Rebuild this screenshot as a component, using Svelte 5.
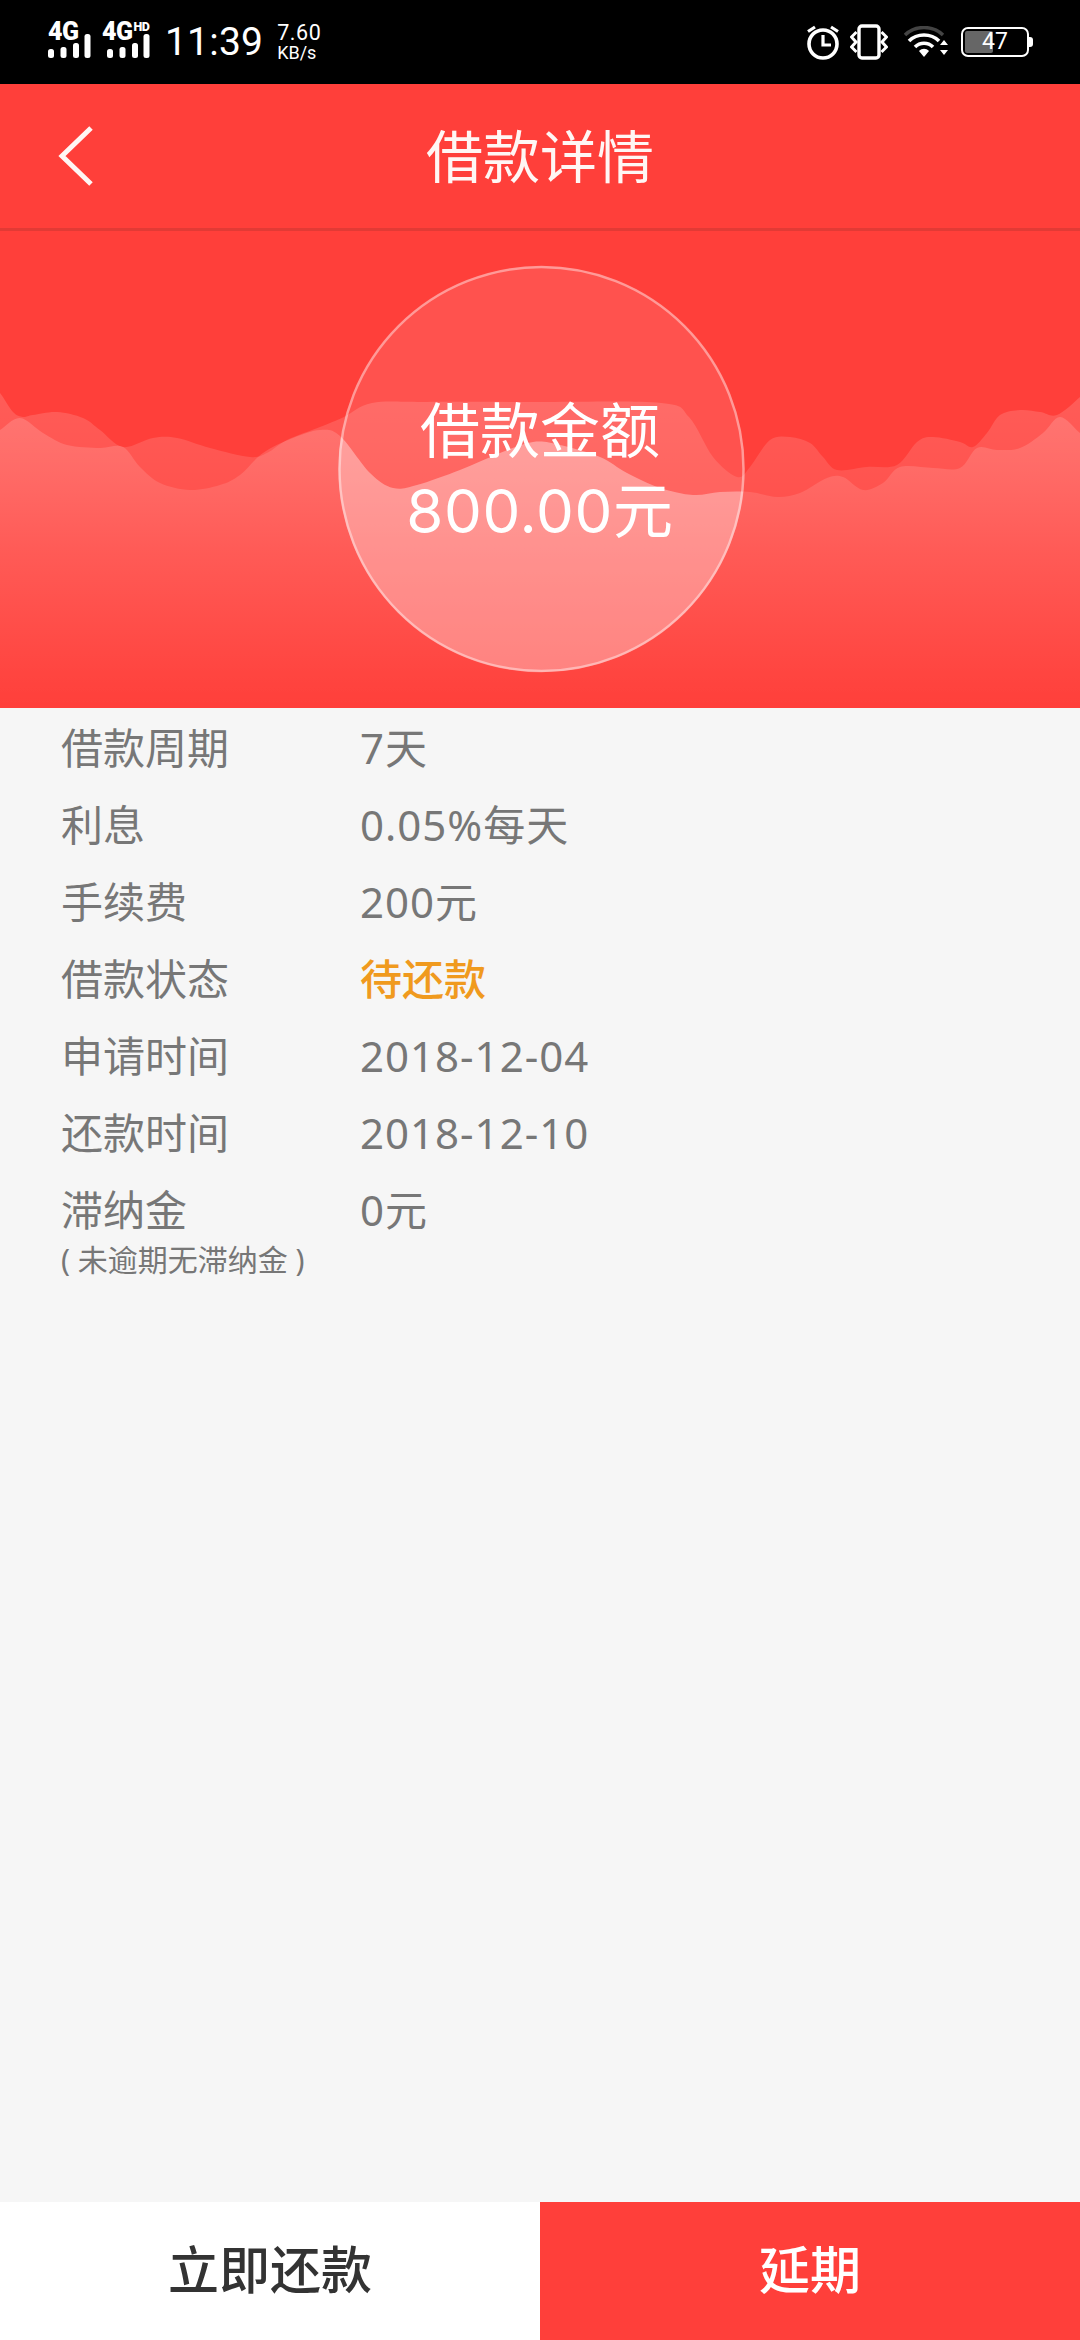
<script>
  const details = [
    { label: '借款周期', value: '7天' },
    { label: '利息', value: '0.05%每天' },
    { label: '手续费', value: '200元' },
    { label: '借款状态', value: '待还款', status: true },
    { label: '申请时间', value: '2018-12-04' },
    { label: '还款时间', value: '2018-12-10' },
    { label: '滞纳金', value: '0元', note: '( 未逾期无滞纳金 )' }
  ];

  const backPts = [[-10,385],[0,393],[13,412],[23,417],[33,415],[57,412],[83,418],[100,430],[123,447],[153,438],[177,438],[210,448],[250,457],[267,453],[287,440],[320,427],[344,417],[372,403],[427,402],[540,402],[661,403],[689,417],[713,457],[737,477],[750,467],[770,440],[790,437],[810,443],[823,457],[837,470],[867,467],[897,465],[917,442],[933,437],[960,442],[973,447],[987,433],[1000,415],[1020,410],[1040,412],[1057,415],[1080,397],[1090,385]];
  const frontPts = [[-10,434],[0,430],[20,418],[43,433],[67,445],[100,448],[123,447],[140,467],[160,483],[190,490],[220,485],[240,475],[263,453],[293,438],[320,430],[340,436],[370,473],[393,488],[417,485],[460,470],[500,453],[533,442],[560,445],[600,457],[627,473],[660,488],[693,495],[720,492],[750,492],[777,497],[800,493],[827,478],[843,477],[863,490],[883,483],[900,467],[933,468],[960,468],[977,448],[997,450],[1020,448],[1043,433],[1060,417],[1080,433],[1090,440]];

  // Catmull-Rom smoothing through the traced crest points, closed along the hero's bottom.
  function wave(pts) {
    let d = `M${pts[0][0]} ${pts[0][1]}`;
    for (let i = 0; i < pts.length - 1; i++) {
      const p0 = pts[Math.max(i - 1, 0)], p1 = pts[i], p2 = pts[i + 1], p3 = pts[Math.min(i + 2, pts.length - 1)];
      const c1 = [p1[0] + (p2[0] - p0[0]) / 6, p1[1] + (p2[1] - p0[1]) / 6];
      const c2 = [p2[0] - (p3[0] - p1[0]) / 6, p2[1] - (p3[1] - p1[1]) / 6];
      d += `C${c1[0].toFixed(1)} ${c1[1].toFixed(1)} ${c2[0].toFixed(1)} ${c2[1].toFixed(1)} ${p2[0]} ${p2[1]}`;
    }
    return d + 'L1090 708L-10 708Z';
  }
  const backPath = wave(backPts);
  const frontPath = wave(frontPts);
  const bars = [[0, 9], [12.5, 11], [25, 15], [36.5, 24]];
</script>

<div class="page">
  <div class="statusbar">
    <div class="status-left">
      <div class="signal">
        <span class="net">4G</span>
        <svg class="bars" width="44" height="24" viewBox="0 0 44 24" aria-hidden="true">
          {#each bars as b}
            <rect x={b[0]} y={24 - b[1]} width="6" height={b[1]} rx="2.5" fill="#fff" />
          {/each}
        </svg>
      </div>
      <div class="signal second">
        <span class="net">4G<sup>HD</sup></span>
        <svg class="bars" width="44" height="24" viewBox="0 0 44 24" aria-hidden="true">
          {#each bars as b}
            <rect x={b[0]} y={24 - b[1]} width="6" height={b[1]} rx="2.5" fill="#fff" />
          {/each}
        </svg>
      </div>
      <span class="clock">11:39</span>
      <span class="speed"><span class="num">7.60</span><span class="unit">KB/s</span></span>
    </div>
    <div class="status-right">
      <svg width="34" height="36" viewBox="0 0 34 36" fill="none" stroke="#fff" aria-hidden="true">
        <circle cx="17" cy="20" r="14" stroke-width="3.6" />
        <path d="M17 11v10h8" stroke-width="3.2" />
        <path d="M2 7.5 9 3M32 7.5 25 3" stroke-width="3.2" />
      </svg>
      <svg class="vib" width="38" height="36" viewBox="0 0 38 36" fill="none" stroke="#fff" aria-hidden="true">
        <rect x="9" y="2" width="20" height="32" rx="3" stroke-width="3.4" />
        <path d="M6.5 8 1.5 13 6 18 1.5 23 6.5 28" stroke-width="3" />
        <path d="M31.5 8 36.5 13 32 18 36.5 23 31.5 28" stroke-width="3" />
      </svg>
      <svg class="wifi" width="46" height="32" viewBox="0 0 46 32" fill="none" aria-hidden="true">
        <path d="M1 9C11-1 29-1 39 9" stroke="#444" stroke-width="3.4" />
        <path d="M5 15C13 7 27 7 35 15" stroke="#fff" stroke-width="3.6" />
        <path d="M11 21C16 16 24 16 29 21" stroke="#fff" stroke-width="3.6" />
        <path d="M15 25C18 22 22 22 25 25L20 31Z" fill="#fff" />
        <path d="M36 19h8l-4-5ZM36 24h8l-4 5Z" fill="#fff" />
      </svg>
      <div class="battery">
        <div class="level"></div>
        <span class="pct">47</span>
        <i class="tip"></i>
      </div>
    </div>
  </div>

  <header class="topbar">
    <svg class="back" width="36" height="60" viewBox="0 0 36 60" fill="none" aria-hidden="true">
      <path d="M33 2 4 30 33 58" stroke="#fff6f4" stroke-width="5" />
    </svg>
    <h1>借款详情</h1>
    <span></span>
  </header>

  <section class="hero">
    <svg class="scene" viewBox="0 231 1080 477" width="1080" height="477" aria-hidden="true">
      <defs>
        <linearGradient id="gb" gradientUnits="userSpaceOnUse" x1="0" y1="400" x2="0" y2="708">
          <stop offset="0" stop-color="#fff" stop-opacity=".15" />
          <stop offset=".5" stop-color="#fff" stop-opacity=".07" />
          <stop offset="1" stop-color="#fff" stop-opacity="0" />
        </linearGradient>
        <linearGradient id="gf" gradientUnits="userSpaceOnUse" x1="0" y1="420" x2="0" y2="708">
          <stop offset="0" stop-color="#fff" stop-opacity=".16" />
          <stop offset=".45" stop-color="#fff" stop-opacity=".08" />
          <stop offset="1" stop-color="#fff" stop-opacity="0" />
        </linearGradient>
        <clipPath id="disc"><circle cx="541.5" cy="469" r="203" /></clipPath>
      </defs>
      <path d={backPath} fill="url(#gb)" />
      <path d={frontPath} fill="url(#gf)" />
      <circle cx="541.5" cy="469" r="203" fill="#fff" fill-opacity=".1" />
      <path d={frontPath} fill="#fff" fill-opacity=".26" clip-path="url(#disc)" />
      <circle cx="541.5" cy="469" r="202" fill="none" stroke="#fff" stroke-opacity=".42" stroke-width="2.5" />
    </svg>
    <div class="amount">
      <div>借款金额</div>
      <div class="sum">800.00元</div>
    </div>
  </section>

  <main class="details">
    {#each details as d}
      <div class="row">
        <div class="label">
          <div>{d.label}</div>
          {#if d.note}<div class="note">{d.note}</div>{/if}
        </div>
        <div class="value" class:status={d.status}>{d.value}</div>
      </div>
    {/each}
  </main>

  <footer class="actions">
    <button class="repay">立即还款</button>
    <button class="extend">延期</button>
  </footer>
</div>

<style>
  :global(body) {
    margin: 0;
    background: #f6f6f6;
  }
  .page {
    display: flex;
    flex-direction: column;
    width: 1080px;
    height: 2340px;
    overflow: hidden;
    font-family: "Noto Sans", "Noto Sans CJK SC", sans-serif;
  }
  .page :global(*) {
    box-sizing: border-box;
  }

  .statusbar {
    display: flex;
    justify-content: space-between;
    align-items: center;
    height: 84px;
    padding: 0 51px 0 48px;
    background: #000;
    color: #fff;
    font-family: Roboto, "Noto Sans", sans-serif;
  }
  .status-left,
  .status-right {
    display: flex;
    align-items: center;
  }
  .signal {
    position: relative;
    width: 54px;
    height: 40px;
  }
  .signal.second {
    width: 63px;
  }
  .net {
    position: absolute;
    left: 0;
    top: -4px;
    font-size: 25px;
    line-height: 28px;
    font-weight: 900;
    letter-spacing: -0.5px;
    white-space: nowrap;
  }
  .net sup {
    font-size: 12.5px;
    line-height: 0;
    vertical-align: 9px;
    margin-left: 1px;
  }
  .bars {
    position: absolute;
    left: 0;
    top: 12px;
  }
  .second .bars {
    left: 5px;
  }
  .clock {
    font-size: 39px;
    line-height: 44px;
    letter-spacing: 0.2px;
  }
  .speed {
    display: flex;
    flex-direction: column;
    margin-left: 14px;
    line-height: 1;
  }
  .num {
    font-size: 21.5px;
    letter-spacing: 0.6px;
  }
  .unit {
    font-size: 18px;
    margin-top: 1px;
  }
  .vib {
    margin-left: 10px;
  }
  .wifi {
    margin-left: 16px;
  }
  .battery {
    position: relative;
    display: flex;
    justify-content: center;
    align-items: center;
    width: 68px;
    height: 30px;
    margin-left: 11px;
    border: 2px solid #fff;
    border-radius: 7px;
  }
  .level {
    position: absolute;
    left: 2px;
    top: 2px;
    bottom: 2px;
    width: 28px;
    background: #666;
    border-radius: 2px;
  }
  .pct {
    position: relative;
    font-size: 23px;
    line-height: 26px;
  }
  .tip {
    position: absolute;
    right: -6px;
    top: 8px;
    width: 4px;
    height: 10px;
    background: #fff;
    border-radius: 0 3px 3px 0;
  }

  .topbar {
    display: grid;
    grid-template-columns: 1fr auto 1fr;
    align-items: center;
    height: 147px;
    padding-left: 58px;
    background: #ff3f3a;
    border-bottom: 3px solid #e23a35;
  }
  .back {
    display: block;
  }
  h1 {
    margin: 0;
    font-size: 57px;
    font-weight: 400;
    line-height: 1.2;
    color: #fff6f4;
    transform: translateX(-29px);
  }

  .hero {
    position: relative;
    display: flex;
    justify-content: center;
    align-items: center;
    height: 477px;
    background: #ff3f3a;
    overflow: hidden;
  }
  .scene {
    position: absolute;
    inset: 0;
  }
  .amount {
    position: relative;
    margin-top: 3px;
    font-size: 60px;
    line-height: 80px;
    color: #fff;
    text-align: center;
    font-family: Inter, "Noto Sans CJK SC", sans-serif;
  }
  .sum {
    letter-spacing: 0.7px;
  }

  .details {
    flex: 1;
    padding: 1px 61px 0;
    background: #f6f6f6;
  }
  .row {
    display: grid;
    grid-template-columns: 299px 1fr;
    font-size: 42px;
    line-height: 77px;
    color: #777;
  }
  .value {
    letter-spacing: 1px;
  }
  .value.status {
    color: #f09a1e;
    font-weight: 500;
    letter-spacing: 0;
  }
  .note {
    font-size: 30px;
    line-height: 29px;
    margin-top: -3px;
    white-space: nowrap;
  }

  .actions {
    display: grid;
    grid-template-columns: 1fr 1fr;
    height: 138px;
  }
  .actions button {
    border: 0;
    padding: 0 0 8px;
    font: inherit;
    font-size: 51px;
    font-weight: 500;
  }
  .repay {
    background: #fff;
    color: #333;
  }
  .extend {
    background: #ff3f3a;
    color: #fff;
  }
</style>
